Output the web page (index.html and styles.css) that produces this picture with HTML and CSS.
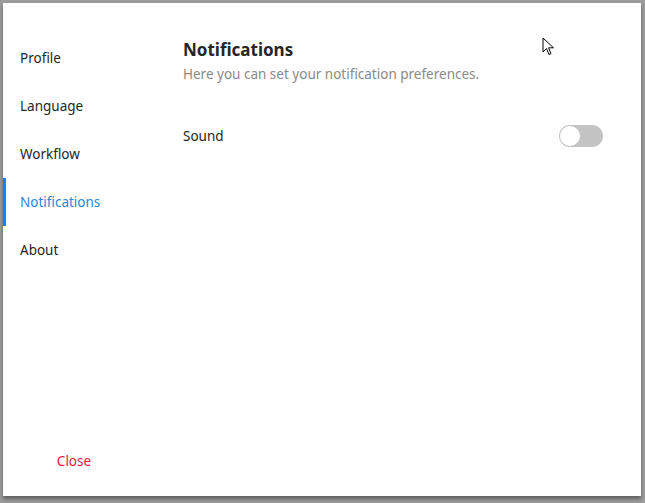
FILE: index.html
```html
<!DOCTYPE html>
<html lang="en">
<head>
    <meta charset="UTF-8">
    <title>Settings</title>
    <link rel="stylesheet" href="styles.css">
</head>
<body>
    <div class="dialog">
        <div class="sidebar">
            <ul class="nav">
                <li class="nav-item">Profile</li>
                <li class="nav-item">Language</li>
                <li class="nav-item">Workflow</li>
                <li class="nav-item active">Notifications</li>
                <li class="nav-item">About</li>
            </ul>
            <button class="close">Close</button>
        </div>

        <div class="content">
            <h1>Notifications</h1>
            <p class="subtitle">Here you can set your notification preferences.</p>

            <div class="setting">
                <span>Sound</span>
                <span class="toggle"><span class="knob"></span></span>
            </div>
        </div>
    </div>

    <!-- mouse pointer -->
    <svg class="cursor" width="14" height="20" viewBox="0 0 14 20">
        <path d="M1 1 L1 15 L4.5 11.5 L7 17.5 L9 16.7 L6.6 10.8 L11.5 10.8 Z" fill="#fff" stroke="#000" stroke-width="1"/>
    </svg>
</body>
</html>
```

FILE: styles.css
```css
body {
    margin: 0;
    height: 503px;
    background-color: #9c9c9c;
    font-family: "Noto Sans", "Open Sans", sans-serif;
    font-size: 13.5px;
    color: #262626;
    overflow: hidden;
}

.dialog {
    display: flex;
    margin: 3px 4px 0 3px;
    height: 493px;
    background-color: #fefefe;
    box-shadow: 0 3px 4px rgba(0, 0, 0, 0.4);
}

.sidebar {
    width: 142px;
    display: flex;
    flex-direction: column;
    padding-top: 31px;
    box-sizing: border-box;
}

.nav {
    list-style: none;
    margin: 0;
    padding: 0;
    flex: 1;
}

.nav-item {
    height: 48px;
    line-height: 48px;
    padding-left: 14px;
    border-left: 3px solid transparent;
}

.nav-item.active {
    border-left-color: #0a84ff;
    color: #2a86d6;
}

.close {
    height: 48px;
    margin-bottom: 11px;
    border: none;
    background: none;
    font-family: inherit;
    font-size: 13.5px;
    color: #e8173c;
    text-align: center;
}

.content {
    flex: 1;
    padding: 35px 38px 0 38px;
}

h1 {
    margin: 0;
    font-size: 17px;
    line-height: 24px;
    font-weight: bold;
}

.subtitle {
    margin: 2px 0 0;
    font-size: 13.5px;
    line-height: 20px;
    color: #8a8a8a;
}

.setting {
    display: flex;
    justify-content: space-between;
    align-items: center;
    margin-top: 40px;
    height: 24px;
}

.toggle {
    width: 44px;
    height: 22px;
    border-radius: 11px;
    background-color: #c4c4c4;
    display: flex;
    align-items: center;
    padding: 0 1px;
    box-sizing: border-box;
}

.knob {
    width: 20px;
    height: 20px;
    border-radius: 50%;
    background-color: #fff;
}

.cursor {
    position: absolute;
    left: 542px;
    top: 37px;
}
```
